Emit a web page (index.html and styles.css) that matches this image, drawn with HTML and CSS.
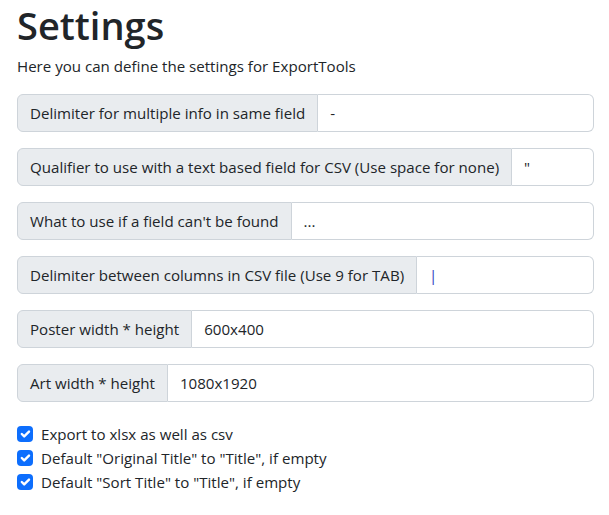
FILE: index.html
```html
<!DOCTYPE html>
<html>
<head>
<meta charset="utf-8">
<link rel="stylesheet" href="styles.css">
</head>
<body>
<div class="page">
  <h1 class="title">Settings</h1>
  <p class="lead">Here you can define the settings for ExportTools</p>

  <div class="group"><span class="label">Delimiter for multiple info in same field</span><span class="field">-</span></div>
  <div class="group"><span class="label">Qualifier to use with a text based field for CSV (Use space for none)</span><span class="field">"</span></div>
  <div class="group"><span class="label">What to use if a field can't be found</span><span class="field">...</span></div>
  <div class="group"><span class="label">Delimiter between columns in CSV file (Use 9 for TAB)</span><span class="field pipe">|</span></div>
  <div class="group"><span class="label">Poster width * height</span><span class="field">600x400</span></div>
  <div class="group"><span class="label">Art width * height</span><span class="field">1080x1920</span></div>

  <div class="checks">
    <label class="check"><span class="box"><svg viewBox="0 0 20 20" width="16" height="16"><path d="M6 10l3 3 6-6" fill="none" stroke="#fff" stroke-width="3" stroke-linecap="round" stroke-linejoin="round"/></svg></span>Export to xlsx as well as csv</label>
    <label class="check"><span class="box"><svg viewBox="0 0 20 20" width="16" height="16"><path d="M6 10l3 3 6-6" fill="none" stroke="#fff" stroke-width="3" stroke-linecap="round" stroke-linejoin="round"/></svg></span>Default "Original Title" to "Title", if empty</label>
    <label class="check"><span class="box"><svg viewBox="0 0 20 20" width="16" height="16"><path d="M6 10l3 3 6-6" fill="none" stroke="#fff" stroke-width="3" stroke-linecap="round" stroke-linejoin="round"/></svg></span>Default "Sort Title" to "Title", if empty</label>
  </div>
</div>
</body>
</html>
```
FILE: styles.css
```css
html, body {
  margin: 0;
  padding: 0;
  background: #fff;
}
body {
  font-family: "Open Sans", "Noto Sans", sans-serif;
  font-size: 15.1px;
  line-height: 24px;
  color: #212529;
}
.page {
  padding: 0 15px 0 17px;
}
.title {
  margin: 0;
  font-size: 38px;
  font-weight: 600;
  line-height: 50px;
}
.lead {
  margin: 4px 0 16px;
}
.group {
  display: flex;
  height: 38px;
  margin-bottom: 16px;
}
.label {
  display: flex;
  align-items: center;
  padding: 0 12px;
  background: #e9ecef;
  border: 1px solid #ced4da;
  border-radius: 6px 0 0 6px;
  color: #212529;
  white-space: nowrap;
}
.field {
  flex: 1;
  display: flex;
  align-items: center;
  padding: 0 12px;
  border: 1px solid #ced4da;
  border-left: 0;
  border-radius: 0 6px 6px 0;
  color: #212529;
}
.pipe {
  color: #3040c0;
}
.checks {
  margin-top: 20px;
  display: flex;
  flex-direction: column;
}
.check {
  display: flex;
  align-items: center;
  height: 24px;
}
.box {
  width: 16px;
  height: 16px;
  border-radius: 4px;
  background: #0d6efd;
  margin-right: 8px;
  display: flex;
}
```
